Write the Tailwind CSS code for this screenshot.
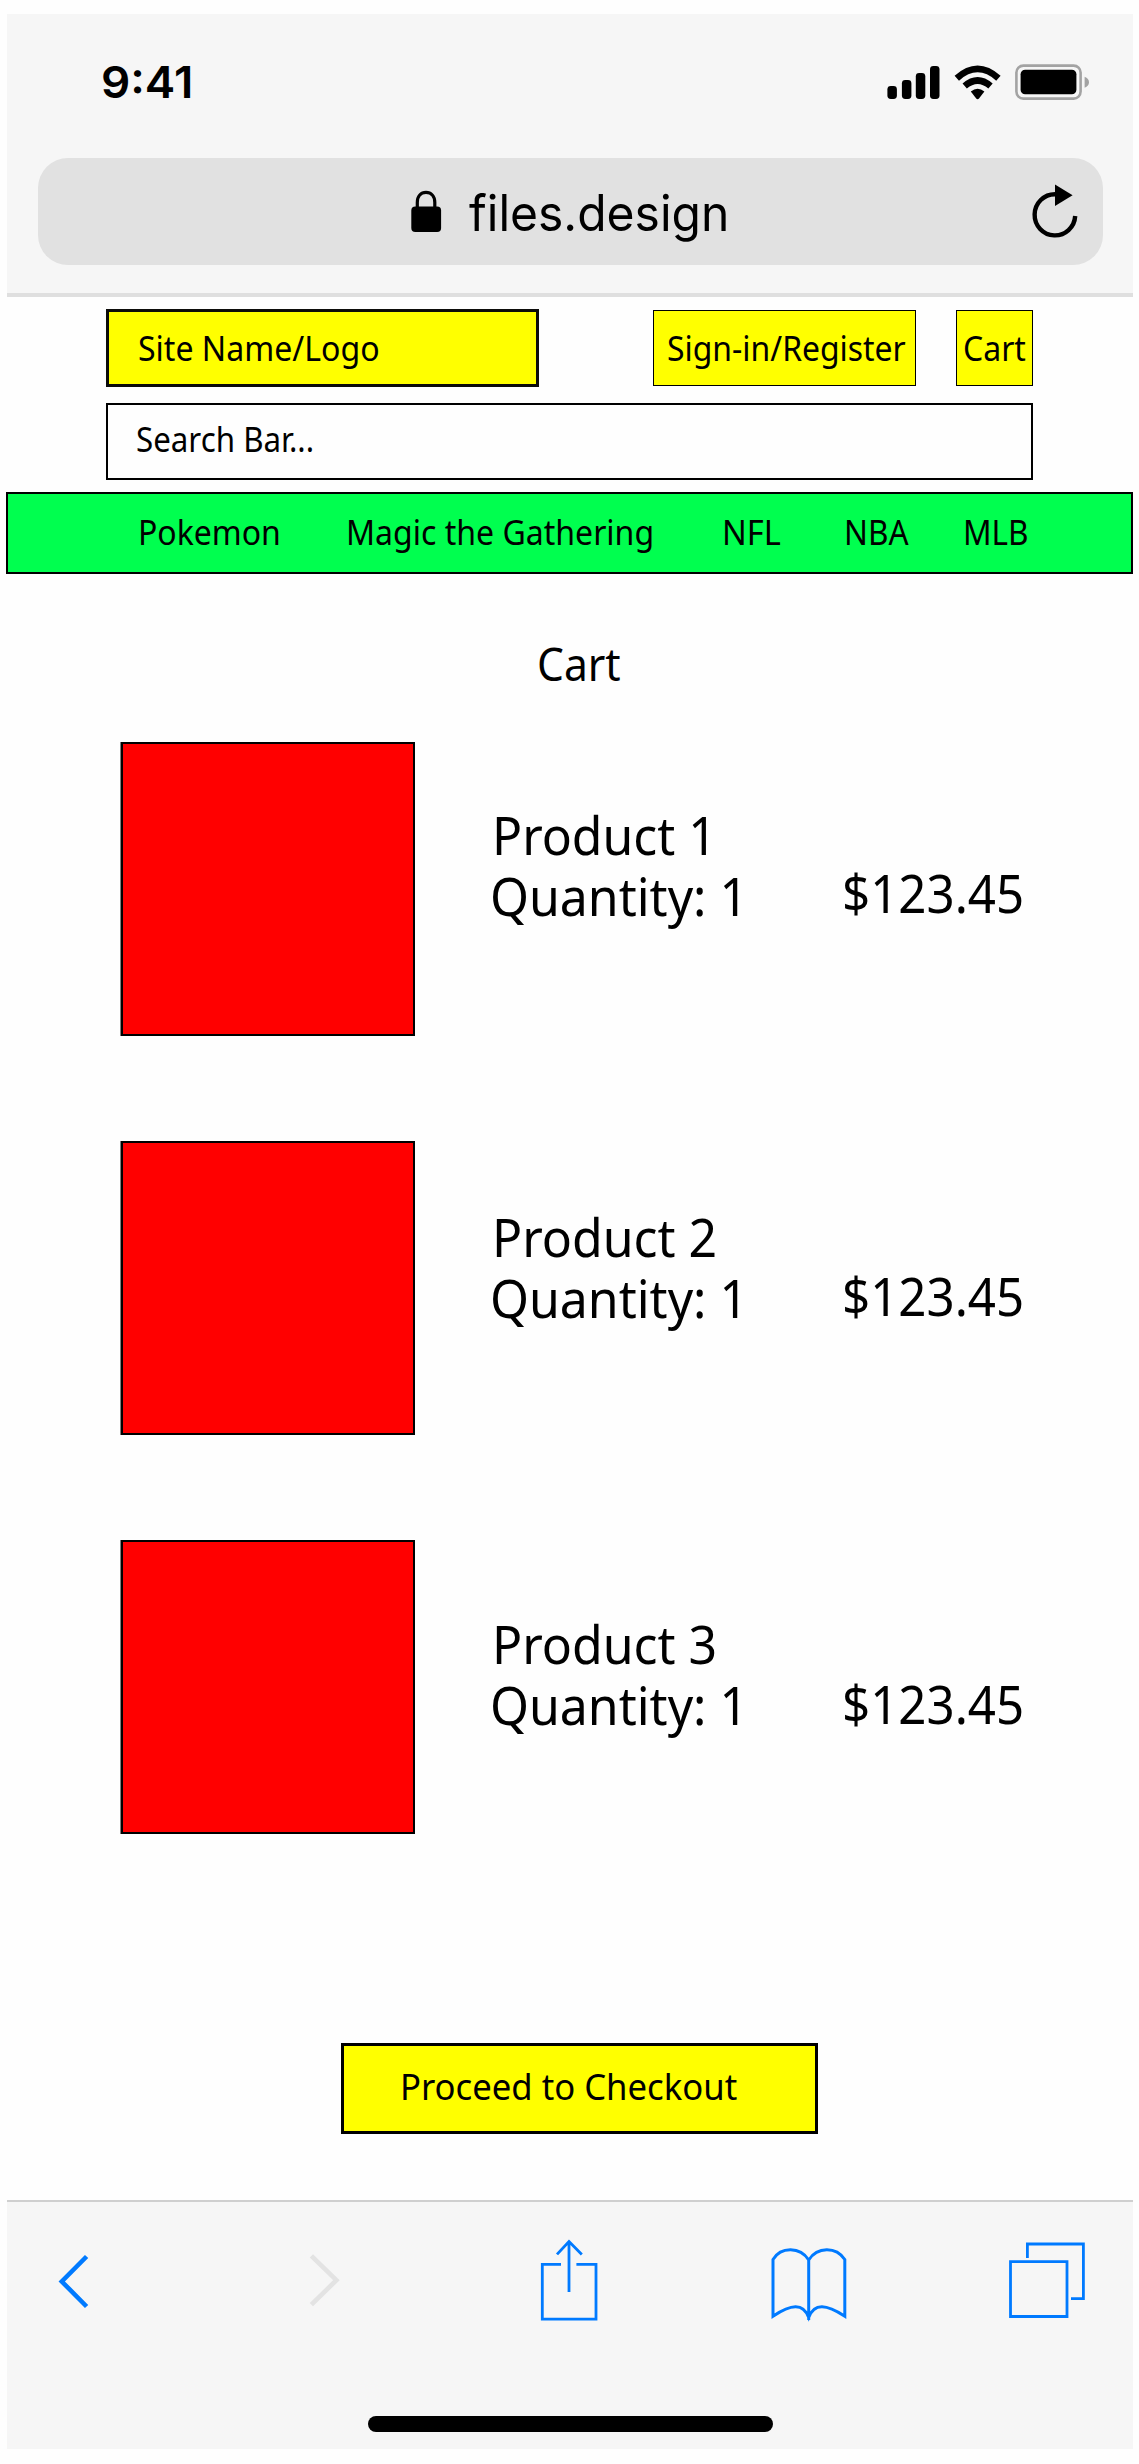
<!DOCTYPE html>
<html lang="en">
<head>
<meta charset="utf-8">
<title>Cart</title>
<script src="https://cdn.jsdelivr.net/npm/@tailwindcss/browser@4"></script>
</head>
<body class="bg-white">
<div class="flex h-[2464px] w-[1139px] flex-col overflow-hidden bg-[#fefefe] pr-[6px] pl-[7px] pt-[14px] pb-[15px] font-['Noto_Sans',sans-serif] text-black">

  <!-- Browser chrome -->
  <header class="flex h-[283px] shrink-0 flex-col border-b-4 border-[#dfdfdf] bg-[#f6f6f6] font-['Inter',sans-serif]">
    <div class="flex h-[144px] items-start pr-[42px] pl-[94px] pt-[44px]">
      <span class="origin-left scale-x-[1.04] text-[44px] leading-[48px] font-semibold">9:41</span>
      <svg class="mt-[6px] ml-auto h-[37px] w-[54px]" viewBox="886 64 54 37">
        <rect x="887.4" y="86" width="9.5" height="13" rx="3.4"/>
        <rect x="901.9" y="80" width="9.5" height="19" rx="3.4"/>
        <rect x="915.8" y="73" width="9.5" height="26" rx="3.4"/>
        <rect x="930" y="66" width="9.5" height="33" rx="3.4"/>
      </svg>
      <svg class="mt-[6px] ml-[13px] h-[37px] w-[49px]" viewBox="953 64 49 37">
        <path d="M956.8 78.2Q977.6 59.6 998.4 78.2" fill="none" stroke="#000" stroke-width="6.6"/>
        <path d="M964.7 86.1Q977.6 75 990.5 86.1" fill="none" stroke="#000" stroke-width="6.6"/>
        <path d="M970.8 91.6Q977.6 85.8 984.4 91.6L979 98.4Q977.6 100 976.2 98.4Z"/>
      </svg>
      <svg class="mt-[6px] ml-[12px] h-[37px] w-[77px]" viewBox="1014 64 77 37">
        <rect x="1016.4" y="65.6" width="64.2" height="33" rx="7" fill="none" stroke="#a3a3a3" stroke-width="2.6"/>
        <rect x="1020.6" y="69.8" width="55.8" height="24.4" rx="4.5"/>
        <path d="M1084.6 76.8Q1089 78.5 1089 82.3T1084.6 87.8Z" fill="#a3a3a3"/>
      </svg>
    </div>
    <div class="mr-[30.5px] ml-[30.5px] flex h-[107px] items-center rounded-[30px] bg-[#e1e1e1] pr-[23.5px] pl-[372.5px]">
      <svg class="h-[44px] w-[32px]" viewBox="410 189 32 44">
        <path d="M417.3 208V201.5C417.3 195 421 191.4 426 191.4S434.8 195 434.800 201.500V208" fill="none" stroke="#000" stroke-width="3.2"/>
        <rect x="411.3" y="205.500" width="29.8" height="25.500" rx="4"/>
      </svg>
      <span class="mt-[2px] ml-[27px] origin-left scale-x-[0.96] text-[50px] leading-[60px] whitespace-nowrap">files.design</span>
      <svg class="ml-auto h-[56px] w-[48px]" viewBox="1031 184 48 56">
        <path d="M1057 194.2H1055A20.3 20.6 0 1 0 1075.2 216" fill="none" stroke="#000" stroke-width="4.4"/>
        <path d="M1055 184.6V206L1072.6 195.3Z"/>
      </svg>
    </div>
  </header>

  <!-- Site header -->
  <div class="mt-3 flex h-[78px] shrink-0 items-center pr-[100px] pl-[99px] text-[34px] leading-[46px]">
    <div class="flex h-[78px] w-[433px] items-center border-3 border-[#0c0c0a] bg-[#ffff00] pl-[29px]"><span class="origin-left scale-x-[0.943] whitespace-nowrap">Site Name/Logo</span></div>
    <a class="ml-auto flex h-[76px] w-[263px] items-center border border-black bg-[#ffff00] pl-[13px]"><span class="origin-left scale-x-[0.938] whitespace-nowrap">Sign-in/Register</span></a>
    <a class="ml-[40px] flex h-[76px] w-[77px] items-center border border-black bg-[#ffff00] pl-[6px]"><span class="origin-left scale-x-[0.94] whitespace-nowrap">Cart</span></a>
  </div>
  <div class="mt-4 mr-[100px] ml-[99px] flex h-[77px] shrink-0 items-center border-2 border-black pb-[5px] pl-[28px] text-[34px] leading-[46px]"><span class="origin-left scale-x-[0.92] whitespace-nowrap">Search Bar...</span></div>
  <nav class="mt-3 -ml-px flex h-[82px] shrink-0 items-center border-2 border-black bg-[#00ff4f] pb-[3px] pl-[130px] text-[34px] leading-[46px] whitespace-nowrap">
    <a class="w-[207.5px]"><span class="inline-block origin-left scale-x-[0.941]">Pokemon</span></a>
    <a class="w-[376px]"><span class="inline-block origin-left scale-x-[0.942]">Magic the Gathering</span></a>
    <a class="w-[122px]"><span class="inline-block origin-left scale-x-[0.96]">NFL</span></a>
    <a class="w-[119px]"><span class="inline-block origin-left scale-x-[0.926]">NBA</span></a>
    <a><span class="inline-block origin-left scale-x-[0.927]">MLB</span></a>
  </nav>

  <!-- Cart contents -->
  <main class="flex grow flex-col pl-[114px]">
    <h1 class="mt-[60px] ml-[416px] h-[60px] text-[45px] leading-[60px]"><span class="inline-block origin-left scale-x-[0.945]">Cart</span></h1>
    <ul class="mt-[48px] flex flex-col gap-[105px] text-[53px] leading-[61px] whitespace-nowrap">
      <li class="flex h-[294px]">
        <div class="w-[294px] border-2 border-black bg-[#ff0000] shadow-[-1px_0_0_#808080]"></div>
        <div class="ml-[75px] w-[352px] pt-[62px]">
          <p class="pl-[2px]"><span class="inline-block origin-left scale-x-[0.94]">Product 1</span></p>
          <p><span class="inline-block origin-left scale-x-[0.942]">Quantity: 1</span></p>
        </div>
        <p class="pt-[120px]"><span class="inline-block origin-left scale-x-[0.929]">$123.45</span></p>
      </li>
      <li class="flex h-[294px]">
        <div class="w-[294px] border-2 border-black bg-[#ff0000] shadow-[-1px_0_0_#808080]"></div>
        <div class="ml-[75px] w-[352px] pt-[65px]">
          <p class="pl-[2px]"><span class="inline-block origin-left scale-x-[0.942]">Product 2</span></p>
          <p><span class="inline-block origin-left scale-x-[0.942]">Quantity: 1</span></p>
        </div>
        <p class="pt-[124px]"><span class="inline-block origin-left scale-x-[0.929]">$123.45</span></p>
      </li>
      <li class="flex h-[294px]">
        <div class="w-[294px] border-2 border-black bg-[#ff0000] shadow-[-1px_0_0_#808080]"></div>
        <div class="ml-[75px] w-[352px] pt-[73px]">
          <p class="pl-[2px]"><span class="inline-block origin-left scale-x-[0.942]">Product 3</span></p>
          <p><span class="inline-block origin-left scale-x-[0.942]">Quantity: 1</span></p>
        </div>
        <p class="pt-[133px]"><span class="inline-block origin-left scale-x-[0.929]">$123.45</span></p>
      </li>
    </ul>
    <button class="mt-[209px] ml-[220px] flex h-[91px] w-[477px] items-center border-3 border-black bg-[#ffff00] pb-[6px] pl-[56px] text-[36.5px] leading-[50px]"><span class="origin-left scale-x-[0.95] whitespace-nowrap">Proceed to Checkout</span></button>
  </main>

  <!-- Browser toolbar -->
  <footer class="flex h-[249px] shrink-0 flex-col border-t-2 border-[#cfcfcf] bg-[#f6f6f6]">
    <div class="flex h-[160px] items-start pr-[47px] pl-[50px] pt-[36px]">
      <svg class="mt-[16px] h-[56px] w-[32px]" viewBox="57 2254 32 56" fill="none" stroke="#007aff" stroke-width="4.6"><path d="M86.6 2256.5 61.8 2281.5 86.6 2306.5"/></svg>
      <svg class="mt-[16px] ml-[220px] h-[56px] w-[32px]" viewBox="310 2254 32 56" fill="none" stroke="#e3e3e3" stroke-width="4.6"><path d="M312.4 2255.8 337.4 2280.2 312.4 2304.6"/></svg>
      <svg class="ml-[198px] h-[84px] w-[60px]" viewBox="540 2238 60 84" fill="none" stroke="#007aff" stroke-width="2.8"><path d="M562 2264.3H543.3V2319.2H597V2264.3H577.4M570 2241.5V2292M558 2254.4 570 2241.5 582.8 2254.4"/></svg>
      <svg class="ml-[171px] h-[84px] w-[78px]" viewBox="771 2238 78 84" fill="none" stroke="#007aff" stroke-width="3"><path d="M809.7 2260C801 2246.5 782 2246.5 774 2259.5V2316.2C792 2304.5 804 2302.5 809.7 2317.5 815.4 2302.5 827.4 2304.5 845.8 2316.2V2259.5C837 2246.5 818.4 2246.5 809.7 2260ZM809.7 2260V2320"/></svg>
      <svg class="ml-auto h-[84px] w-[78px]" viewBox="1008 2238 78 84" fill="none" stroke="#007aff" stroke-width="2.8"><path d="M1010.5 2261.7H1067V2316.5H1010.5ZM1027.4 2258V2244H1083.4V2298.7H1071"/></svg>
    </div>
    <div class="mt-[54px] ml-[360.5px] h-4 w-[405px] rounded-full bg-black"></div>
  </footer>
</div>
</body>
</html>
